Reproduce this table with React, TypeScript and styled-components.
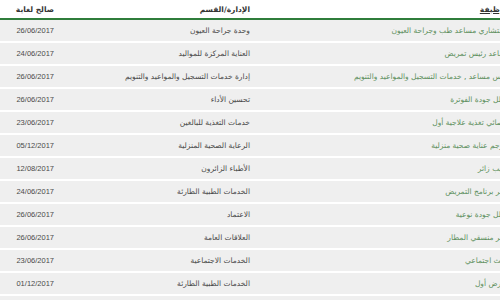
import React from "react";
import styled, { createGlobalStyle } from "styled-components";

const Global = createGlobalStyle`
  html, body { margin: 0; padding: 0; background: #ffffff; overflow: hidden; }
  body { width: 500px; height: 300px; }
`;

const Table = styled.table`
  direction: rtl;
  width: 518px;
  border-collapse: collapse;
  table-layout: fixed;
  font-family: "DejaVu Sans", "Liberation Sans", sans-serif;
`;

const HeadCell = styled.th<{ $w: number; $sorted?: boolean }>`
  width: ${(p) => p.$w}px;
  height: 19px;
  padding: 0 8px;
  box-sizing: border-box;
  text-align: right;
  font-size: 7.5px;
  font-weight: bold;
  color: #333333;
  border-bottom: 2px solid #2f7d3b;
  vertical-align: middle;
  white-space: nowrap;
  overflow: hidden;
  text-decoration: ${(p) => (p.$sorted ? "underline" : "none")};
`;

const Row = styled.tr`
  background: #efefef;
`;

const Cell = styled.td<{ $kind: "job" | "dept" | "date" }>`
  height: 23px;
  padding: 0 8px;
  box-sizing: border-box;
  border-bottom: 2px solid #ffffff;
  text-align: right;
  vertical-align: middle;
  white-space: nowrap;
  overflow: hidden;
  font-size: 7.5px;
  font-family: ${(p) =>
    p.$kind === "date" ? '"Liberation Sans", sans-serif' : '"DejaVu Sans", sans-serif'};
  color: ${(p) => (p.$kind === "job" ? "#5e8f5e" : "#4a4a4a")};
`;

const rows: [string, string, string][] = [
  ["مستشاري مساعد طب وجراحة العيون", "وحدة جراحة العيون", "26/06/2017"],
  ["مساعد رئيس تمريض", "العناية المركزة للمواليد", "24/06/2017"],
  ["رئيس مساعد , خدمات التسجيل والمواعيد والتنويم", "إدارة خدمات التسجيل والمواعيد والتنويم", "26/06/2017"],
  ["محلل جودة الفوترة", "تحسين الأداء", "26/06/2017"],
  ["أخصائي تغذية علاجية أول", "خدمات التغذية للبالغين", "23/06/2017"],
  ["مترجم عناية صحية منزلية", "الرعاية الصحية المنزلية", "05/12/2017"],
  ["طبيب زائر", "الأطباء الزائرون", "12/08/2017"],
  ["مدير برنامج التمريض", "الخدمات الطبية الطارئة", "24/06/2017"],
  ["محلل جودة نوعية", "الاعتماد", "26/06/2017"],
  ["مدير منسقي المطار", "العلاقات العامة", "26/06/2017"],
  ["باحث اجتماعي", "الخدمات الاجتماعية", "23/06/2017"],
  ["ممرض أول", "الخدمات الطبية الطارئة", "01/12/2017"],
  ["صيدلي أول", "الصيدلية", "01/12/2017"],
];

export default function App() {
  return (
    <>
      <Global />
      <Table>
        <thead>
          <tr>
            <HeadCell $w={260} $sorted>الوظيفة</HeadCell>
            <HeadCell $w={196}>الإدارة/القسم</HeadCell>
            <HeadCell $w={62}>صالح لغاية</HeadCell>
          </tr>
        </thead>
        <tbody>
          {rows.map((r, i) => (
            <Row key={i}>
              <Cell $kind="job">{r[0]}</Cell>
              <Cell $kind="dept">{r[1]}</Cell>
              <Cell $kind="date">{r[2]}</Cell>
            </Row>
          ))}
        </tbody>
      </Table>
    </>
  );
}
